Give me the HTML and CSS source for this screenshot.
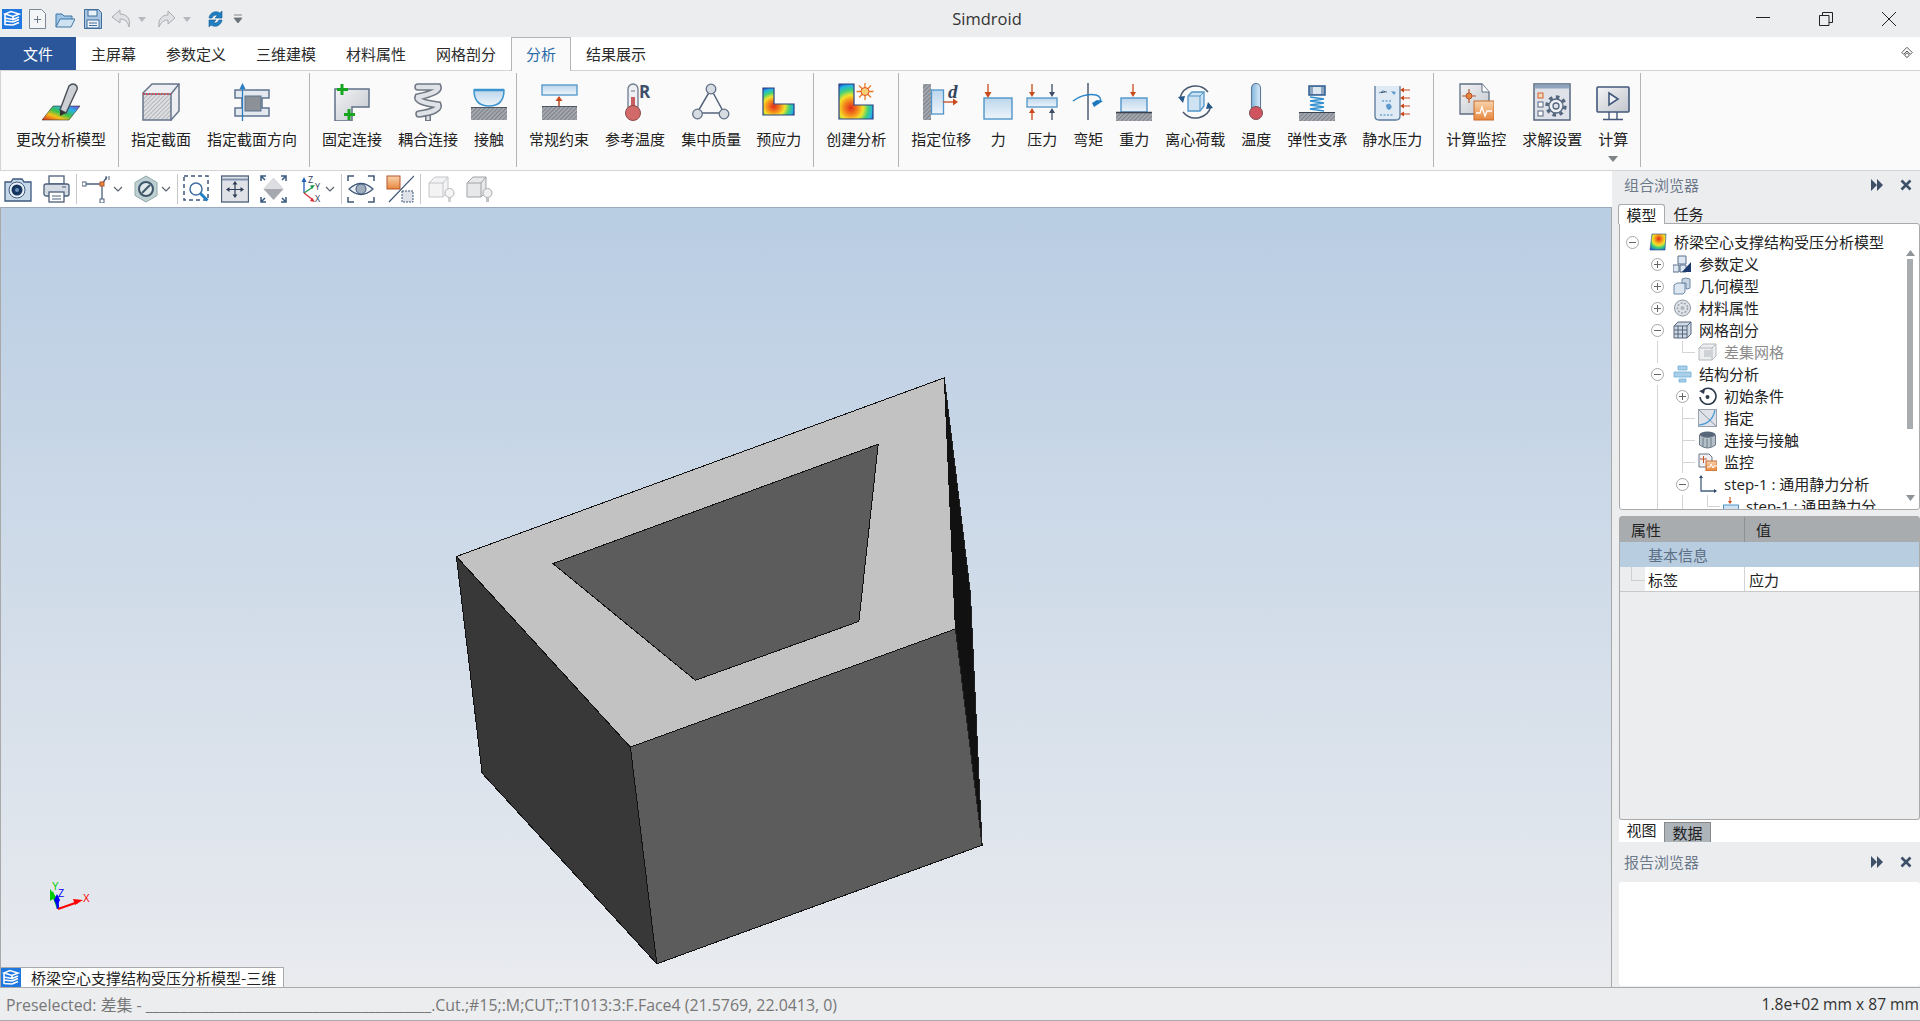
FILE: index.html
```html
<!DOCTYPE html>
<html lang="zh">
<head>
<meta charset="utf-8">
<title>Simdroid</title>
<link rel="stylesheet" href="styles.css">
</head>
<body>
<svg class="defs" aria-hidden="true">
  <defs>
    <linearGradient id="rainbow" x1="0" y1="1" x2="1" y2="0"><stop offset="0" stop-color="#d8201a"/><stop offset=".3" stop-color="#f5c21a"/><stop offset=".5" stop-color="#3cc04a"/><stop offset=".75" stop-color="#28b0e8"/><stop offset="1" stop-color="#7a3fd0"/></linearGradient>
    <radialGradient id="heat" cx=".35" cy=".68" r=".75"><stop offset="0" stop-color="#e02a1c"/><stop offset=".28" stop-color="#f58a1c"/><stop offset=".48" stop-color="#f3e32a"/><stop offset=".68" stop-color="#3fd07a"/><stop offset=".85" stop-color="#25b4e6"/><stop offset="1" stop-color="#1c3fc8"/></radialGradient>
    <radialGradient id="heat2" cx=".55" cy=".3" r=".8"><stop offset="0" stop-color="#e02a1c"/><stop offset=".3" stop-color="#f5a01c"/><stop offset=".5" stop-color="#f3e32a"/><stop offset=".7" stop-color="#3fd07a"/><stop offset="1" stop-color="#1c5fd8"/></radialGradient>
    <linearGradient id="blueFill" x1="0" y1="0" x2="0" y2="1"><stop offset="0" stop-color="#bcd6ec"/><stop offset="1" stop-color="#edf4fa"/></linearGradient>
    <linearGradient id="grayFill" x1="0" y1="0" x2="1" y2="1"><stop offset="0" stop-color="#f2f3f5"/><stop offset="1" stop-color="#c2c6cc"/></linearGradient>
    <linearGradient id="orangeFill" x1="0" y1="0" x2="0" y2="1"><stop offset="0" stop-color="#f8d3ad"/><stop offset="1" stop-color="#e8873d"/></linearGradient>
    <linearGradient id="thermoBlue" x1="0" y1="0" x2="1" y2="0"><stop offset="0" stop-color="#7fb4dc"/><stop offset="1" stop-color="#dcecf7"/></linearGradient>
    <pattern id="hatch" width="3" height="3" patternUnits="userSpaceOnUse" patternTransform="rotate(45)"><rect width="3" height="3" fill="#a8acb2"/><rect width="1.2" height="3" fill="#7d8288"/></pattern>
    <pattern id="hatchL" width="3" height="3" patternUnits="userSpaceOnUse" patternTransform="rotate(45)"><rect width="3" height="3" fill="#e2e3e5"/><rect width="1.2" height="3" fill="#b4b7bb"/></pattern>
  </defs>
</svg>

<header class="titlebar">
  <div class="qat">
    <svg class="logo" width="20" height="20" viewBox="0 0 20 20"><rect width="20" height="20" fill="#1e78e0"/><path d="M3 5l6-2.500 8 2.500-6 2.500zM3 5v11M11 7.500v3l6-2.500M11 10.500L3 9M11 13l6-2.500M11 13L3 12M11 16l6-2.500M11 16l-8-.5" fill="none" stroke="#fff" stroke-width="1.600"/></svg>
    <svg width="17" height="20" viewBox="0 0 17 20"><path d="M.5.5h12l4 4v15H.5z" fill="#f4f5f7" stroke="#7b8794"/><path d="M8.500 7v7M5 10.500h7" stroke="#6a7686" fill="none"/></svg>
    <svg width="20" height="20" viewBox="0 0 20 20"><path d="M1 5h6l2 2h8v4H5l-4 7z" fill="#9fc4e4" stroke="#3f78a8"/><path d="M5 10h15l-4 8H1z" fill="#cfe2f2" stroke="#3f78a8"/></svg>
    <svg width="18" height="20" viewBox="0 0 18 20"><path d="M.5.5h14l3 3v16H.5z" fill="#a9c6e2" stroke="#3e6d9c"/><rect x="4" y="1" width="9" height="6" fill="#e9f1f8" stroke="#3e6d9c"/><rect x="3" y="11" width="12" height="8" fill="#f1f5f9" stroke="#3e6d9c"/><path d="M5 14h8M5 16.500h8" stroke="#3e6d9c"/></svg>
    <svg width="20" height="20" viewBox="0 0 20 20"><path d="M9 1L1 8l8 6v-4c5 0 8 3 9 8 2-8-2-13-9-13z" fill="#dfe1e4" stroke="#a9adb2"/></svg>
    <svg class="caret" width="8" height="20" viewBox="0 0 8 20"><path d="M0 8h8l-4 5z" fill="#b4b7bb"/></svg>
    <svg class="after-caret" width="18" height="20" viewBox="0 0 18 20"><path d="M10 2l7 7-7 6v-4C6 11 3 13 1 18 0 10 4 6 10 6z" fill="#dfe1e4" stroke="#a9adb2"/></svg>
    <svg class="caret" width="8" height="20" viewBox="0 0 8 20"><path d="M0 8h8l-4 5z" fill="#b4b7bb"/></svg>
    <span class="qat-sep"></span>
    <svg width="17" height="20" viewBox="0 0 17 20"><path d="M2 9a7 7 0 0 1 11-5l2-2v7H8l2.500-2.500A4 4 0 0 0 5 9z" fill="#1f7fc4" stroke="#135b90" stroke-width=".6"/><path d="M15 11a7 7 0 0 1-11 5l-2 2v-7h7l-2.500 2.500A4 4 0 0 0 12 11z" fill="#1f7fc4" stroke="#135b90" stroke-width=".6"/></svg>
    <svg class="caret-last" width="10" height="20" viewBox="0 0 10 20"><path d="M1 6h8M1 9h8l-4 5z" fill="#6b7178" stroke="#6b7178" stroke-width=".8"/></svg>
  </div>
  <div class="title">Simdroid</div>
  <div class="caption">
    <span class="cap"><svg width="14" height="14" viewBox="0 0 14 14"><path d="M0 5.500h14" stroke="#222" fill="none"/></svg></span>
    <span class="cap"><svg width="14" height="14" viewBox="0 0 14 14"><path d="M.5 3.500h9.500v10H.5z M3.500 3.500V.5H13.500V10.500H10" fill="none" stroke="#222"/></svg></span>
    <span class="cap"><svg width="14" height="14" viewBox="0 0 14 14"><path d="M0 0l14 14M14 0L0 14" stroke="#222" fill="none"/></svg></span>
  </div>
</header>

<nav class="tabs">
  <a class="tab file">文件</a>
  <a class="tab">主屏幕</a>
  <a class="tab">参数定义</a>
  <a class="tab">三维建模</a>
  <a class="tab">材料属性</a>
  <a class="tab">网格剖分</a>
  <a class="tab active">分析</a>
  <a class="tab">结果展示</a>
  <svg class="collapse" width="12" height="12" viewBox="0 0 12 12"><path d="M.8 6.500L6 1.300l5.200 5.200-1.800 1.800L6 5 2.600 8.300z" fill="#fff" stroke="#555"/><path d="M3.500 9.200L6 6.800l2.500 2.400L6 11.500z" fill="#fff" stroke="#555"/></svg>
</nav>

<section class="ribbon">
  <div class="rgroup">
    <div class="ritem"><svg width="38" height="38" viewBox="0 0 38 38"><path d="M0 37l11-14h27L27 37z" fill="url(#rainbow)" stroke="#3a3a3a" stroke-width=".6"/><path d="M27 3q3-3 6-1.500t2 5L24 30l-6-3z" fill="#cdd1d6" stroke="#4b5058" stroke-width="1.400"/><path d="M18 27l6 3-6 3z" fill="#333"/></svg><span>更改分析模型</span></div>
  </div>
  <div class="rgroup">
    <div class="ritem"><svg width="38" height="38" viewBox="0 0 38 38"><path d="M1 10L10 1h27v27l-8 9z" fill="#eceef1" stroke="#66758a" stroke-width="1.500"/><rect x="1" y="11" width="28" height="26" fill="url(#hatchL)" stroke="#66758a" stroke-width="1.500"/><path d="M1 11h28" stroke="#e33" stroke-dasharray="1.500 1.500" stroke-width="1.500"/><path d="M29 11l8-10" stroke="#66758a" stroke-width="1.500"/></svg><span>指定截面</span></div>
    <div class="ritem"><svg width="36" height="38" viewBox="0 0 36 38"><path d="M1 7h34v8h-7v10h7v8H1v-8h7V15H1z" fill="#e4e9ef" stroke="#5d7390" stroke-width="1.500"/><rect x="11" y="13" width="16" height="15" fill="#8c9097" stroke="#5d7390"/><path d="M8.500 38V3" stroke="#2c7fc4" stroke-width="1.300"/><path d="M8.500 0l3 6h-6z" fill="#2c7fc4"/></svg><span>指定截面方向</span></div>
  </div>
  <div class="rgroup">
    <div class="ritem"><svg width="36" height="38" viewBox="0 0 36 38"><path d="M1 6h34v18H18v14H1z" fill="url(#grayFill)" stroke="#5f7087" stroke-width="1.500"/><path d="M8 1v11M3 6.500h11M15 26v11M10 31.500h11" stroke="#16a51e" stroke-width="3"/></svg><span>固定连接</span></div>
    <div class="ritem"><svg width="30" height="38" viewBox="0 0 30 38"><path d="M15 28v10" stroke="#707884" stroke-width="6"/><path d="M15 29v8" stroke="#dfe2e6" stroke-width="3"/><path d="M5 4H25Q27 9 5 14Q3 19 25 22Q27 28 6 31" fill="none" stroke="#707884" stroke-width="7.500" stroke-linecap="round"/><path d="M5 4H25Q27 9 5 14Q3 19 25 22Q27 28 6 31" fill="none" stroke="#dfe2e6" stroke-width="4.500" stroke-linecap="round"/></svg><span>耦合连接</span></div>
    <div class="ritem"><svg width="36" height="38" viewBox="0 0 36 38"><path d="M3 7h30q0 16-15 16T3 7z" fill="url(#blueFill)" stroke="#3d95cf" stroke-width="1.500"/><path d="M3 7h30" stroke="#3d95cf" stroke-width="2.500"/><rect y="24" width="36" height="13" fill="url(#hatch)"/><path d="M0 24.500h36" stroke="#4c5562"/></svg><span>接触</span></div>
  </div>
  <div class="rgroup">
    <div class="ritem"><svg width="37" height="38" viewBox="0 0 37 38"><rect x="1" y="2" width="35" height="10" fill="url(#blueFill)" stroke="#4f95c9" stroke-width="1.300"/><path d="M18 23v-7" stroke="#b94a20" stroke-width="1.500"/><path d="M18 13l3.500 5h-7z" fill="#c4481c"/><rect x="1" y="23" width="35" height="14" fill="url(#hatch)"/><path d="M1 23.500h35" stroke="#4c5562"/></svg><span>常规约束</span></div>
    <div class="ritem"><svg width="30" height="38" viewBox="0 0 30 38"><rect x="8" y="1" width="10" height="28" rx="5" fill="#eef0f3" stroke="#6d7b8e" stroke-width="1.300"/><path d="M11 8h4" stroke="#6d7b8e"/><rect x="11" y="14" width="4" height="14" fill="#c95c5c"/><circle cx="13" cy="30" r="7.500" fill="#d26a6a" stroke="#8b4a4a"/><text class="icon-r" x="19" y="15">R</text></svg><span>参考温度</span></div>
    <div class="ritem"><svg width="38" height="38" viewBox="0 0 38 38"><path d="M19 6L5 30h27z" fill="none" stroke="#55657c" stroke-width="1.500"/><circle cx="19" cy="6" r="4.800" fill="#d7dbe2" stroke="#5f6f85" stroke-width="1.300"/><circle cx="5.500" cy="31" r="4.800" fill="#d7dbe2" stroke="#5f6f85" stroke-width="1.300"/><circle cx="32" cy="31" r="4.800" fill="#d7dbe2" stroke="#5f6f85" stroke-width="1.300"/></svg><span>集中质量</span></div>
    <div class="ritem tight"><svg width="33" height="38" viewBox="0 0 33 38"><path d="M1 5h11v16h20v11H1z" fill="url(#heat)" stroke="#2c4280" stroke-width="1.200"/></svg><span>预应力</span></div>
  </div>
  <div class="rgroup">
    <div class="ritem"><svg width="36" height="38" viewBox="0 0 36 38"><path d="M1 1h15v21h19v14H1z" fill="url(#heat)" stroke="#2c4280" stroke-width="1.200"/><path d="M27 0v17M18.500 8.500h17M21 2.500l12 12M33 2.500l-12 12" stroke="#ee7a20" stroke-width="1.300"/><circle cx="27" cy="8.500" r="4" fill="#f8cf74" stroke="#e0501f"/></svg><span>创建分析</span></div>
  </div>
  <div class="rgroup narrow-end">
    <div class="ritem"><svg width="37" height="38" viewBox="0 0 37 38"><rect y="1" width="8" height="36" fill="url(#hatch)"/><rect x="8.500" y="7" width="12" height="24" fill="url(#blueFill)" stroke="#4f95c9" stroke-width="1.300"/><path d="M20 19h11" stroke="#c94a1c" stroke-width="1.300"/><path d="M35 19l-5-3.500v7z" fill="#c94a1c"/><text class="icon-d" x="25" y="15">d</text></svg><span>指定位移</span></div>
    <div class="ritem narrow"><svg width="30" height="38" viewBox="0 0 30 38"><rect x="1" y="15" width="28" height="21" fill="url(#blueFill)" stroke="#4f95c9" stroke-width="1.400"/><path d="M5 1v9" stroke="#c94a1c" stroke-width="1.300"/><path d="M5 15l-3.500-6h7z" fill="#c94a1c"/></svg><span>力</span></div>
    <div class="ritem"><svg width="32" height="38" viewBox="0 0 32 38"><rect x="1" y="15" width="30" height="9" fill="url(#blueFill)" stroke="#4f95c9" stroke-width="1.300"/><path d="M6 1v9M6 37v-9" stroke="#c94a1c" stroke-width="1.300"/><path d="M6 14l-3-5h6zM6 25l-3 5h6z" fill="#c94a1c"/><path d="M26 1v9M26 37v-9" stroke="#3d4d66" stroke-width="1.300"/><path d="M26 14l-3-5h6zM26 25l-3 5h6z" fill="#3d4d66"/></svg><span>压力</span></div>
    <div class="ritem"><svg width="32" height="38" viewBox="0 0 32 38"><path d="M16 0v37" stroke="#4c5c72" stroke-width="1.500"/><path d="M1 18Q12 10 24 12q6 2 4 7" fill="none" stroke="#2a84c8" stroke-width="1.500"/><path d="M22 24l9-6-6-1-5 3z" fill="#1e78be"/></svg><span>弯矩</span></div>
    <div class="ritem"><svg width="36" height="38" viewBox="0 0 36 38"><rect x="5" y="15" width="26" height="14" fill="url(#blueFill)" stroke="#4f95c9" stroke-width="1.400"/><path d="M17 1v9" stroke="#c94a1c" stroke-width="1.300"/><path d="M17 14l-3-5h6z" fill="#c94a1c"/><rect y="30" width="36" height="8" fill="url(#hatch)"/><path d="M0 29.500h36" stroke="#39424f" stroke-width="1.500"/></svg><span>重力</span></div>
    <div class="ritem"><svg width="37" height="38" viewBox="0 0 37 38"><path d="M3 15A16 16 0 0 1 31 9M34 23A16 16 0 0 1 6 29" fill="none" stroke="#4a5a70" stroke-width="1.500"/><path d="M1 14l7-1-2 7zM36 25l-7 1 2-7z" fill="#26578a"/><path d="M11 13l4-4h12v14l-4 5H11z" fill="#cfe2f2" stroke="#4f95c9" stroke-width="1.300"/><path d="M11 13h12v15M23 13l4-4" fill="none" stroke="#4f95c9"/></svg><span>离心荷载</span></div>
    <div class="ritem"><svg width="16" height="38" viewBox="0 0 16 38"><rect x="3.500" y="0.500" width="9" height="30" rx="4.500" fill="url(#thermoBlue)" stroke="#5e7a9a" stroke-width="1.100"/><circle cx="8" cy="30" r="6.500" fill="#d0545e" stroke="#7c5058"/></svg><span>温度</span></div>
    <div class="ritem"><svg width="36" height="38" viewBox="0 0 36 38"><rect x="10" y="3" width="16" height="9" fill="#8da6c0" stroke="#2f5d92" stroke-width="1.500"/><rect x="14" y="4" width="8" height="7" fill="#dfe6ee"/><path d="M11 14l14 2-14 2 14 2-14 2 14 2-14 2 14 2" fill="none" stroke="#2f8fd0" stroke-width="1.300"/><rect y="30" width="36" height="8" fill="url(#hatch)"/><path d="M0 29.500h36" stroke="#39424f"/></svg><span>弹性支承</span></div>
    <div class="ritem tight"><svg width="36" height="38" viewBox="0 0 36 38"><path d="M1 3v30q0 4 4 4h17q4 0 4-4V3" fill="#dfeaf4" stroke="#5a7a9a" stroke-width="1.300"/><path d="M5 10l4-2 4 1M8 18h10M6 32h14" stroke="#6fa5d0" stroke-dasharray="2 1.500" stroke-width="1.300"/><path d="M17 8l5 1-2 3zM12 22q3-3 5 0t-2 5q-3-1-3-5z" fill="#5d99cc"/><path d="M36 7H29M36 15H29M36 23H29M36 31H29" stroke="#c94a1c" stroke-width="1.200"/><path d="M26 7l4-2.500v5zM26 15l4-2.500v5zM26 23l4-2.500v5zM26 31l4-2.500v5z" fill="#c94a1c"/></svg><span>静水压力</span></div>
  </div>
  <div class="rgroup last">
    <div class="ritem"><svg width="35" height="38" viewBox="0 0 35 38"><path d="M1 1h22l7 8v22H1z" fill="url(#grayFill)" stroke="#5f6f85" stroke-width="1.300"/><path d="M23 1v8h7" fill="#fff" stroke="#5f6f85"/><path d="M3 13h14M10 6v14" stroke="#b4552a" stroke-width="1.200"/><circle cx="10" cy="13" r="3" fill="#e8873d" stroke="#b4552a"/><rect x="15" y="18" width="20" height="19" fill="url(#orangeFill)" stroke="#c66a2c"/><path d="M17 30h4l2-6 3 9 2-5h5" fill="none" stroke="#fff" stroke-width="1.300"/></svg><span>计算监控</span></div>
    <div class="ritem"><svg width="38" height="38" viewBox="0 0 38 38"><rect x="1" y="1" width="36" height="36" fill="#dfe3e9" stroke="#55677f" stroke-width="1.500"/><rect x="1.500" y="1.500" width="35" height="4" fill="#8fa3bc"/><rect x="5" y="10" width="5" height="5" fill="#f5d9bb" stroke="#d4622a"/><rect x="5" y="19" width="5" height="5" fill="#fff" stroke="#55677f"/><rect x="5" y="28" width="5" height="5" fill="#fff" stroke="#55677f"/><circle cx="23" cy="23" r="9" fill="none" stroke="#55677f" stroke-width="3.400" stroke-dasharray="3.500 3.500"/><circle cx="23" cy="23" r="7" fill="#eef0f3" stroke="#55677f" stroke-width="1.300"/><circle cx="23" cy="23" r="3" fill="#dfe3e9" stroke="#55677f" stroke-width="1.300"/></svg><span>求解设置</span></div>
    <div class="ritem has-caret"><svg width="34" height="38" viewBox="0 0 34 38"><rect x="1" y="4" width="32" height="25" rx="1" fill="url(#grayFill)" stroke="#43587a" stroke-width="1.600"/><path d="M13 10l9 6-9 6z" fill="#eef1f5" stroke="#43587a" stroke-width="1.600"/><path d="M13 29v7M21 29v7M7 36.500h20" stroke="#43587a" stroke-width="1.400"/></svg><span>计算</span><svg class="rcaret" width="10" height="6" viewBox="0 0 10 6"><path d="M0 0h10L5 6z" fill="#7f8286"/></svg></div>
  </div>
</section>

<main class="work">
  <div class="left">
    <div class="toolbar">
      <div class="tgroup first">
        <svg width="28" height="28" viewBox="0 0 28 28"><path d="M1 7h6l2-3h9l2 3h7v19H1z" fill="#c7d8e8" stroke="#3d587e" stroke-width="1.300"/><circle cx="13" cy="15" r="8" fill="#e9f0f6" stroke="#3d587e"/><circle cx="13" cy="15" r="5.500" fill="#17365f"/><circle cx="13" cy="15" r="2" fill="#6f93bf"/></svg>
        <svg width="27" height="28" viewBox="0 0 27 28"><rect x="6" y="1" width="15" height="8" fill="#fff" stroke="#4c5f7a" stroke-width="1.300"/><rect x="1" y="9" width="25" height="12" rx="2" fill="#d5dbe3" stroke="#4c5f7a" stroke-width="1.300"/><rect x="6" y="17" width="15" height="10" fill="#fff" stroke="#4c5f7a" stroke-width="1.300"/><path d="M9 21h9M9 24h9M19 12h4" stroke="#4c5f7a"/></svg>
      </div>
      <div class="tgroup">
        <div class="dd"><svg width="28" height="28" viewBox="0 0 28 28"><path d="M3 9h17M20 9v16M20 9l5-7" fill="none" stroke="#4c5f7a" stroke-width="1.300"/><rect x="0" y="7" width="4" height="4" fill="#fff" stroke="#4c5f7a"/><rect x="18" y="24" width="4" height="4" fill="#fff" stroke="#4c5f7a"/><rect x="18" y="7" width="4" height="4" fill="#e8873d" stroke="#b4552a"/><path d="M24 1v4M27 1v4" stroke="#4c5f7a"/></svg><svg class="chev" width="10" height="28" viewBox="0 0 10 28"><path d="M1 12l4 4 4-4" fill="none" stroke="#5a6470" stroke-width="1.200"/></svg></div>
        <div class="dd"><svg width="24" height="28" viewBox="0 0 24 28"><path d="M12 1l11 6.500v13L12 27 1 20.500v-13z" fill="#bed0d2" stroke="#8fa7aa"/><circle cx="12" cy="14" r="7" fill="#dfe8ea" stroke="#3d5668" stroke-width="2"/><path d="M8 18l8-8" stroke="#3d5668" stroke-width="2"/></svg><svg class="chev" width="10" height="28" viewBox="0 0 10 28"><path d="M1 12l4 4 4-4" fill="none" stroke="#5a6470" stroke-width="1.200"/></svg></div>
      </div>
      <div class="tgroup">
        <svg width="27" height="28" viewBox="0 0 27 28"><rect x="1" y="1" width="24" height="24" fill="none" stroke="#3f5878" stroke-width="1.500" stroke-dasharray="4 3"/><circle cx="13" cy="14" r="6" fill="#fff" stroke="#3f6fa0" stroke-width="1.500"/><path d="M17.500 18.500l7 7" stroke="#1f7fc4" stroke-width="3"/></svg>
        <svg width="28" height="28" viewBox="0 0 28 28"><rect x=".5" y="1" width="27" height="26" fill="#dfe2e7" stroke="#4c5f7a" stroke-width="1.300"/><path d="M1 4.500h26" stroke="#7f93ad" stroke-width="2"/><path d="M14 8v13M7.500 14.500h13" stroke="#2d3d55" stroke-width="1.200"/><path d="M14 6l-2.500 3.500h5zM14 23l-2.500-3.500h5zM5 14.500L8.500 12v5zM23 14.500L19.500 12v5z" fill="#2d3d55"/></svg>
        <svg width="27" height="28" viewBox="0 0 27 28"><path d="M13.500 3l10 11-10 11-10-11z" fill="#a5a9af"/><path d="M13.500 3l10 11H3.500z" fill="#dcdee1"/><path d="M1 6V1h5M26 6V1h-5M1 22v5h5M26 22v5h-5M2 2l3 3M25 2l-3 3M2 26l3-3M25 26l-3-3" fill="none" stroke="#35577f" stroke-width="1.500"/></svg>
        <div class="dd"><svg width="24" height="28" viewBox="0 0 24 28"><path d="M6 18V5" stroke="#1f5fb4" stroke-width="1.300"/><path d="M6 2L3.500 7h5z" fill="#1f5fb4"/><path d="M6 18l9-6" stroke="#1b9a4a" stroke-width="1.300"/><path d="M17 10l-5 .5 2 3.500z" fill="#1b9a4a"/><path d="M6 18l9 7" stroke="#d8323a" stroke-width="1.300"/><path d="M17 27l-5-1 2-3.500z" fill="#d8323a"/><text class="icon-ax" x="10" y="8">Z</text><text class="icon-ax" x="17" y="15">Y</text><text class="icon-ax" x="17" y="27">X</text></svg><svg class="chev" width="10" height="28" viewBox="0 0 10 28"><path d="M1 12l4 4 4-4" fill="none" stroke="#5a6470" stroke-width="1.200"/></svg></div>
      </div>
      <div class="tgroup">
        <svg width="28" height="28" viewBox="0 0 28 28"><path d="M1 6V1h6M27 6V1h-6M1 22v5h6M27 22v5h-6" fill="none" stroke="#3f5878" stroke-width="1.500"/><path d="M2 14q12-11 24 0-12 11-24 0z" fill="#eef1f5" stroke="#3f5878" stroke-width="1.200"/><circle cx="14" cy="14" r="5" fill="#9fadbd" stroke="#3f5878"/></svg>
        <svg width="28" height="28" viewBox="0 0 28 28"><rect x="1" y="1" width="13" height="13" fill="url(#orangeFill)" stroke="#b4552a"/><path d="M3 27L28 1" stroke="#3f5878" stroke-width="1.200"/><rect x="16" y="16" width="11" height="11" fill="#dfe3e9" stroke="#3f5878" stroke-dasharray="2 1"/></svg>
      </div>
      <div class="tgroup end">
        <svg width="27" height="28" viewBox="0 0 27 28"><path d="M1 8l6-6h13v15l-5 5H1z" fill="#f3f3f4" stroke="#c4c6c9"/><path d="M1 8h14v14M15 8l5-6" fill="none" stroke="#c4c6c9"/><circle cx="21.500" cy="18" r="4.500" fill="#f6f6f6" stroke="#b4b6b9"/><path d="M20 23h3v4h-3z" fill="#d0d2d4"/></svg>
        <svg width="27" height="28" viewBox="0 0 27 28"><path d="M1 8l6-6h13v15l-5 5H1z" fill="#e7e8ea" stroke="#a0a3a7"/><path d="M1 8h14v14M15 8l5-6" fill="none" stroke="#a0a3a7"/><circle cx="21.500" cy="18" r="4.500" fill="#f0f0f1" stroke="#a8aaad"/><path d="M20 23h3v4h-3z" fill="#c0c2c5"/></svg>
      </div>
    </div>

    <div class="viewport">
      <svg class="scene" viewBox="1 208 1610 779" width="1610" height="779" preserveAspectRatio="none">
        <g class="model">
          <polygon points="456.4,556.5 630.4,747.1 656.8,963.8 482.1,773.2" fill="#383838" stroke="#111"/>
          <polygon points="630.4,747.1 955.4,628.9 982.1,845.2 656.8,963.8" fill="#5c5c5c" stroke="#111"/>
          <polygon points="944.3,377.8 970.4,593 982.1,845.2 955.4,628.9" fill="#111" stroke="#222"/>
          <polygon points="456.4,556.5 944.3,377.8 955.4,628.9 630.4,747.1" fill="#c2c2c2" stroke="#111"/>
          <polygon points="552.9,563.6 878.2,444.2 858.9,621.4 695.4,680.3" fill="#5c5c5c" stroke="#111"/>
        </g>
        <g class="axes">
          <path d="M58 908L52 892" stroke="#0c0" stroke-width="2.500"/>
          <path d="M50 889l6 8-6 4z" fill="#0c0"/>
          <path d="M58 909l-1-12" stroke="#00f" stroke-width="2.500"/>
          <path d="M57 894l3 6-3 6-3-6z" fill="#00f"/>
          <path d="M58 909l20-7" stroke="#f00" stroke-width="2"/>
          <path d="M83 900l-10-1 2 6z" fill="#f00"/>
          <text class="ax" x="52" y="890" fill="#0c0">Y</text>
          <text class="ax" x="58" y="897" fill="#00f">Z</text>
          <text class="ax" x="83" y="902" fill="#f00">X</text>
        </g>
      </svg>
      <div class="doc-tab">
        <svg width="20" height="20" viewBox="0 0 20 20"><rect width="20" height="20" fill="#1e78e0"/><path d="M3 5l6-2.500 8 2.500-6 2.500zM3 5v11M11 7.500v3l6-2.500M11 10.500L3 9M11 13l6-2.500M11 13L3 12M11 16l6-2.500M11 16l-8-.5" fill="none" stroke="#fff" stroke-width="1.600"/></svg>
        <span>桥梁空心支撑结构受压分析模型-三维</span>
      </div>
    </div>
  </div>

  <aside class="panel">
    <div class="ptitle first"><span>组合浏览器</span><div class="pbtns">
      <svg width="14" height="14" viewBox="0 0 14 14"><path d="M1 1l6 6-6 6zM7 1l6 6-6 6z" fill="#3e5068"/></svg>
      <svg width="12" height="12" viewBox="0 0 12 12"><path d="M1.500 1.500l9 9M10.500 1.500l-9 9" stroke="#3e5068" stroke-width="2.600"/></svg>
    </div></div>
    <div class="ptabs"><span class="ptab on">模型</span><span class="ptab">任务</span></div>
    <div class="treebox">
      <div class="tree">
        <div class="row root"><i class="exp minus"></i><svg width="18" height="18" viewBox="0 0 18 18"><path d="M3 1h14l-1 16H1z" fill="url(#heat2)" stroke="#2c4280" stroke-width=".6"/></svg><span>桥梁空心支撑结构受压分析模型</span></div>
        <div class="row"><b class="b"></b><i class="exp plus"></i><svg width="19" height="18" viewBox="0 0 19 18"><path d="M5 1h8v8H5zM0 10h6v7H0zM7 10h6v7H7z" fill="#dce7f2" stroke="#5a6f8c"/><path d="M18 7v10H9z" fill="#1d3a6e"/></svg><span>参数定义</span></div>
        <div class="row"><b class="b"></b><i class="exp plus"></i><svg width="19" height="18" viewBox="0 0 19 18"><path d="M1 8l3-2h8v9l-2 2H1z" fill="#dce7f2" stroke="#6c88a8"/><path d="M9 2q4-2 8 0v9q-2 1-4 1V6H9z" fill="#c8d6e4" stroke="#6c88a8"/></svg><span>几何模型</span></div>
        <div class="row"><b class="b"></b><i class="exp plus"></i><svg width="19" height="18" viewBox="0 0 19 18"><circle cx="9.500" cy="9" r="8" fill="#dfe3e8" stroke="#8a949f"/><circle cx="9.500" cy="9" r="5" fill="none" stroke="#9aa3ad" stroke-dasharray="2 1.500" stroke-width="1.500"/><circle cx="9.500" cy="9" r="2" fill="#aeb5bd"/></svg><span>材料属性</span></div>
        <div class="row"><b class="b"></b><i class="exp minus"></i><svg width="19" height="18" viewBox="0 0 19 18"><path d="M1 5l4-4h13v12l-4 4H1z" fill="#cfd8e2" stroke="#55677f"/><path d="M1 5h13v12M14 5l4-4M5 5v12M9.500 5v12M1 9h13M1 13h13" fill="none" stroke="#55677f"/></svg><span>网格剖分</span></div>
        <div class="row"><b class="b"></b><b class="v"></b><b class="l"></b><svg class="dim" width="19" height="18" viewBox="0 0 19 18"><path d="M1 5l4-4h13v12l-4 4H1z" fill="#eceef0" stroke="#b5b8bc"/><path d="M1 5h13v12M14 5l4-4" fill="none" stroke="#b5b8bc"/><rect x="6" y="7" width="7" height="7" fill="#cfd2d6"/></svg><span class="muted">差集网格</span></div>
        <div class="row"><b class="b"></b><i class="exp minus"></i><svg width="19" height="18" viewBox="0 0 19 18"><path d="M5 1h9v4H5zM1 7h17v5H1zM6 14h7v3H6z" fill="#a9cfe8" stroke="#6fb0d8" stroke-width=".8"/></svg><span>结构分析</span></div>
        <div class="row"><b class="b"></b><b class="v"></b><i class="exp plus"></i><svg width="19" height="18" viewBox="0 0 19 18"><path d="M5 3a8 8 0 1 1-3 7" fill="none" stroke="#2c3a4c" stroke-width="1.600"/><path d="M1 4l6-2-1 5z" fill="#2c3a4c"/><circle cx="9.500" cy="10" r="2" fill="#2c3a4c"/></svg><span>初始条件</span></div>
        <div class="row"><b class="b"></b><b class="v"></b><b class="t"></b><svg width="19" height="18" viewBox="0 0 19 18"><rect x="0.500" y="0.500" width="18" height="17" fill="#dfe3e9" stroke="#99a2ad"/><path d="M1 1l17 16" stroke="#8a94a0"/><path d="M1 16Q14 15 17 1" fill="none" stroke="#4c9ad6" stroke-width="1.200"/></svg><span>指定</span></div>
        <div class="row"><b class="b"></b><b class="v"></b><b class="t"></b><svg width="19" height="18" viewBox="0 0 19 18"><ellipse cx="9.500" cy="3.500" rx="8" ry="3" fill="#56677a"/><path d="M1.500 4v10q8 6 16 0V4q-8 5-16 0z" fill="#b5bfc8" stroke="#6c7a88"/><path d="M5 7v9M9 8v9M13 7v9" stroke="#6c7a88"/></svg><span>连接与接触</span></div>
        <div class="row"><b class="b"></b><b class="v"></b><b class="t"></b><svg width="19" height="18" viewBox="0 0 19 18"><path d="M1 1h10l3 3v10H1z" fill="#eef0f3" stroke="#6a7686"/><path d="M2 6h7M5.500 3v7" stroke="#c0552a"/><rect x="8" y="8" width="11" height="10" fill="url(#orangeFill)" stroke="#c66a2c"/><path d="M9 14h3l1-3 2 4 1-2h3" fill="none" stroke="#fff"/></svg><span>监控</span></div>
        <div class="row"><b class="b"></b><b class="v"></b><i class="exp minus"></i><svg width="19" height="18" viewBox="0 0 19 18"><path d="M3 2v14h15" fill="none" stroke="#46607e" stroke-width="1.300"/><path d="M1 3l2-3 2 3zM16 14l3 2-3 2z" fill="#2c4a6e"/></svg><span class="latin">step-1 : 通用静力分析</span></div>
        <div class="row"><b class="b"></b><b class="v"></b><b class="v"></b><b class="l"></b><svg width="16" height="18" viewBox="0 0 16 18"><rect x="0.500" y="8" width="15" height="9.500" fill="#cfe2f2" stroke="#4f95c9"/><path d="M7 0v5" stroke="#c94a1c"/><path d="M7 7L5 4h4z" fill="#c94a1c"/></svg><span class="latin">step-1 : 通用静力分</span></div>
      </div>
      <div class="vscroll">
        <svg width="9" height="6" viewBox="0 0 9 6"><path d="M0 6h9L4.500 0z" fill="#8f9498"/></svg>
        <div class="track"><div class="thumb"></div></div>
        <svg width="9" height="6" viewBox="0 0 9 6"><path d="M0 0h9L4.500 6z" fill="#8f9498"/></svg>
      </div>
    </div>
    <div class="props">
      <div class="phead"><span class="c1">属性</span><span class="c2">值</span></div>
      <div class="pcat"><span>基本信息</span></div>
      <div class="prow"><span class="pguide"></span><span class="pname">标签</span><span class="pval">应力</span></div>
    </div>
    <div class="btabs"><span class="btab">视图</span><span class="btab sel">数据</span></div>
    <div class="ptitle"><span>报告浏览器</span><div class="pbtns">
      <svg width="14" height="14" viewBox="0 0 14 14"><path d="M1 1l6 6-6 6zM7 1l6 6-6 6z" fill="#3e5068"/></svg>
      <svg width="12" height="12" viewBox="0 0 12 12"><path d="M1.500 1.500l9 9M10.500 1.500l-9 9" stroke="#3e5068" stroke-width="2.600"/></svg>
    </div></div>
    <div class="report"></div>
  </aside>
</main>

<footer class="status">
  <span class="st-left">Preselected: 差集 - _________________________________________.Cut.;#15;:M;CUT;:T1013:3:F.Face4 (21.5769, 22.0413, 0)</span>
  <span class="st-right">1.8e+02 mm x 87 mm</span>
</footer>
</body>
</html>
```

FILE: styles.css
```css
* { box-sizing: border-box; }
html, body { margin: 0; padding: 0; height: 100%; }
body {
  width: 1920px; height: 1021px; overflow: hidden;
  display: flex; flex-direction: column;
  font-family: "Noto Sans CJK SC", "Noto Sans", sans-serif;
  font-size: 15px; color: #222; background: #ecedef;
}
svg { display: block; flex: none; }
.defs { width: 0; height: 0; }

/* title bar */
.titlebar { height: 37px; background: #ecedef; display: flex; align-items: center; flex: none; }
.qat { width: 243px; display: flex; align-items: center; gap: 9px; padding-left: 2px; height: 37px; }
.qat .logo { margin-right: -2px; }
.qat .caret { margin-left: -2px; }
.qat .after-caret { margin-left: 3px; }
.qat-sep { width: 1px; height: 20px; background: #c4c6ca; margin: 0 -1px 0 -1px; }
.qat .caret-last { margin-left: 0; }
.title { flex: 1; text-align: center; font-family: "Open Sans", sans-serif; font-size: 16.500px; color: #333; margin-top: -1px; }
.caption { display: flex; width: 189px; }
.cap { width: 63px; height: 37px; display: flex; align-items: center; justify-content: center; }

/* tabs */
.tabs { height: 33px; background: #fff; display: flex; align-items: stretch; flex: none; position: relative; }
.tab { padding: 0 15px; line-height: 33px; color: #2a2a2a; }
.tab.file { width: 76px; background: #2b579a; color: #fff; text-align: center; padding: 0; }
.tab.active { color: #2b6aa8; background: #fafafa; border: 1px solid #b5b5b5; border-bottom: 0; padding: 0 14px; line-height: 32px; margin-bottom: -1px; z-index: 1; }
.collapse { margin: 9px 7px 0 auto; }

/* ribbon */
.ribbon { height: 101px; background: #fafafa; border: 1px solid #d4d4d4; border-right: 0; display: flex; padding-left: 3px; flex: none; }
.rgroup { display: flex; height: 94px; margin-top: 2px; padding: 10px 4px 0; border-right: 1px solid #b4b4b4; }
.rgroup.narrow-end { padding-right: 3px; }
.ritem { display: flex; flex-direction: column; align-items: center; padding: 0 8px; }
.ritem svg { height: 38px; margin: 0 -19px; }
.ritem span { margin-top: 8px; line-height: 20px; white-space: nowrap; color: #222; }
.ritem.tight { margin-left: -1px; }
.ritem.narrow { padding: 0 6px 0 4px; }
.ritem.narrow span { min-width: 30px; text-align: center; }
.ritem .rcaret { height: 6px; margin: 7px 0 0; }

/* work area */
.work { flex: 1; display: flex; min-height: 0; }
.left { width: 1612px; display: flex; flex-direction: column; flex: none; }
.toolbar { height: 36px; background: #fff; display: flex; align-items: center; flex: none; }
.tgroup { display: flex; gap: 11px; padding: 0 6px 0 5px; height: 30px; align-items: center; border-right: 1px solid #c8c8c8; }
.tgroup.first { padding-left: 4px; }
.tgroup.end { border-right: 0; padding-left: 7px; }
.dd { display: flex; gap: 3px; }

.viewport {
  flex: 1; position: relative; overflow: hidden;
  background: linear-gradient(#b9cde3, #e9ebef);
  border-top: 1px solid #9aa9bb; border-left: 1px solid #a9a9a9; border-right: 1px solid #a9a9a9;
}
.scene { width: 1610px; height: 779px; }
.model { shape-rendering: crispEdges; stroke-width: 1; }
.ax { font-family: "Liberation Sans", sans-serif; font-size: 10px; }
.icon-r { font-family: "Open Sans", sans-serif; font-weight: 700; font-size: 17px; fill: #3d4f6a; }
.icon-d { font-family: "Liberation Serif", serif; font-style: italic; font-weight: 700; font-size: 19px; fill: #33445c; }
.icon-ax { font-family: "Open Sans", sans-serif; font-size: 9px; fill: #2d3d55; }
.doc-tab {
  position: absolute; left: 0; bottom: 0; height: 20px; width: 283px;
  display: flex; align-items: center; background: #fff;
  border: 1px solid #aaa; border-left: 0; border-bottom: 0; overflow: hidden;
}
.doc-tab span { margin-left: 10px; white-space: nowrap; font-size: 15px; line-height: 18px; }

/* right panel */
.panel { flex: 1; background: #ecedef; display: flex; flex-direction: column; min-width: 0; }
.ptitle { height: 40px; display: flex; align-items: center; justify-content: space-between; padding: 0 8px 0 12px; color: #6c7a8c; flex: none; }
.ptitle.first { height: 28px; }
.ptitle > span { line-height: 20px; }
.pbtns { display: flex; align-items: center; gap: 15px; }
.pbtns svg:first-child { margin-right: 1px; }
.ptabs { display: flex; margin: 5px 0 -1px 6px; height: 20px; position: relative; z-index: 1; flex: none; }
.ptab { padding: 0 7px; line-height: 19px; color: #222; width: 47px; text-align: center; }
.ptab.on { background: #fff; border: 1px solid #aaa; border-bottom: 0; border-radius: 3px 3px 0 0; }
.treebox { height: 287px; margin-left: 7px; background: #fff; border: 1px solid #aaa; border-radius: 0 3px 3px 3px; display: flex; overflow: hidden; flex: none; }
.tree { flex: 1; min-width: 0; padding-top: 7px; overflow: hidden; }
.row { height: 22px; display: flex; align-items: center; white-space: nowrap; }
.row > svg { margin-left: 3px; }
.row.root > svg { margin-left: 4px; }
.row > span { margin-left: 7px; line-height: 20px; color: #222; }
.row > span.muted { color: #8a8a8a; }
.row > span.latin { font-family: "Open Sans", "Noto Sans CJK SC", sans-serif; }
.row b { flex: none; width: 25px; height: 22px; }
.row b.b { background: none; }
.row b.v { background: linear-gradient(#d4d4d4, #d4d4d4) 12px 0 / 1px 100% no-repeat; }
.row b.t { background: linear-gradient(#d4d4d4, #d4d4d4) 12px 0 / 1px 100% no-repeat, linear-gradient(#d4d4d4, #d4d4d4) 12px 11px / 13px 1px no-repeat; }
.row b.l { background: linear-gradient(#d4d4d4, #d4d4d4) 12px 0 / 1px 12px no-repeat, linear-gradient(#d4d4d4, #d4d4d4) 12px 11px / 13px 1px no-repeat; }
.exp {
  flex: none; width: 13px; height: 13px; margin: 0 6px; border: 1px solid #a8a8a8; border-radius: 50%; background-color: #fff;
  background-repeat: no-repeat;
}
.exp.minus { background-image: linear-gradient(#666, #666); background-size: 7px 1px; background-position: center; }
.exp.plus { background-image: linear-gradient(#666, #666), linear-gradient(#666, #666); background-size: 7px 1px, 1px 7px; background-position: center, center; }
.vscroll { width: 12px; display: flex; flex-direction: column; align-items: center; padding: 26px 0 8px; gap: 3px; flex: none; margin-right: 3px; }
.track { flex: 1; width: 6px; }
.thumb { height: 170px; background: #a9acaf; }

.props { flex: 1; margin: 6px 0 0 7px; background: #ecedef; border: 1px solid #aaa; border-radius: 3px; min-height: 0; }
.phead { height: 25px; background: #a9acaf; display: flex; line-height: 25px; color: #222; }
.c1 { width: 125px; padding-left: 11px; border-right: 1px solid #8e9194; }
.c2 { flex: 1; padding-left: 11px; }
.pcat { height: 25px; background: #b8cde0; padding-left: 28px; line-height: 25px; color: #5c6f85; }
.prow { height: 25px; display: flex; background: #fff; line-height: 25px; border-bottom: 1px solid #c9c9c9; }
.prow .pguide {
  width: 25px; flex: none;
  background: linear-gradient(#cfcfcf, #cfcfcf) 11px 0 / 1px 14px no-repeat, linear-gradient(#cfcfcf, #cfcfcf) 11px 13px / 14px 1px no-repeat, #ecedef;
}
.pname { width: 100px; padding-left: 3px; border-right: 1px solid #d4d4d4; }
.pval { flex: 1; padding-left: 4px; }
.btabs { height: 22px; margin-left: 7px; background: #fff; display: flex; align-items: flex-end; flex: none; }
.btab { line-height: 20px; width: 45px; text-align: center; height: 22px; color: #222; }
.btab.sel { width: 47px; height: 20px; background: #adb4ba; border: 1px solid #888; border-bottom: 0; line-height: 19px; }
.report { height: 104px; margin: 0 0 1px 7px; background: #fff; border-radius: 3px; flex: none; }

/* status */
.status { height: 34px; flex: none; background: #ecedef; border-top: 1px solid #aaa; border-bottom: 1px solid #aaa; display: flex; align-items: center; justify-content: space-between; padding: 0 1px 0 6px; font-family: "Open Sans", "Noto Sans CJK SC", sans-serif; }
.st-left { color: #777; font-size: 15.900px; white-space: nowrap; }
.st-right { color: #333; font-size: 15.600px; white-space: nowrap; }
```
